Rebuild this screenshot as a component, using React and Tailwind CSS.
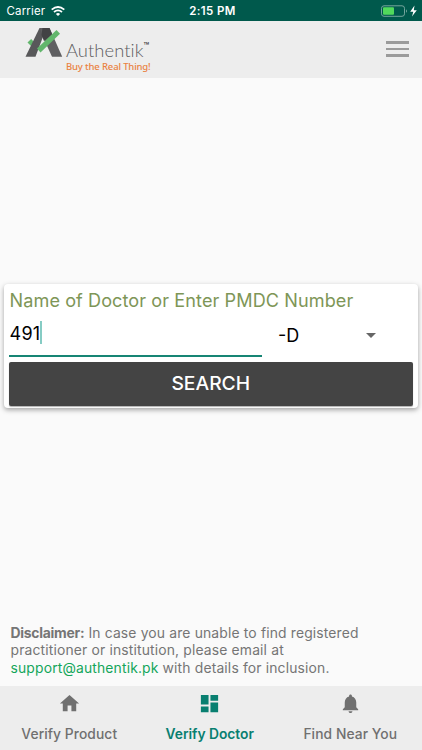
import React from "react";

function Logo() {
  return (
    <div className="flex pl-[25px]">
      <svg className="mt-[7px] h-[30px] w-[38px] shrink-0" viewBox="0 0 38 30">
        <path d="M2.5 14.5L6.2 11L9 14L6.5 18.5Z" fill="#62b66c" />
        <path d="M14.5 0H21L17.5 10L10.5 28.8H0.5Z" fill="#58585a" />
        <path d="M15 0H24.5L37.2 28.8H27L17.5 8Z" fill="#5f5f61" />
        <path d="M17.5 0H24.5L27.2 6.2L19 13L16.5 7Z" fill="#424244" />
        <path d="M31.5 2L35 5.8L15.5 24.5L12 20.5Z" fill="#62b66c" />
      </svg>
      <div className="flex flex-col pl-[3px] pt-[20px]">
        <div className="flex h-[19px] items-start whitespace-nowrap text-[#5c5c60]">
          <span className="font-[Lato] text-[18.4px] font-light leading-[19px] tracking-[0.05px]">Authentik</span>
          <span className="text-[9px] font-semibold leading-[9px] tracking-[-0.5px] text-[#444]">™</span>
        </div>
        <span className="mt-px whitespace-nowrap font-['Noto_Sans'] text-[9.5px] font-medium leading-[11px] tracking-[-0.15px] text-[#ea8242]">Buy the Real Thing!</span>
      </div>
    </div>
  );
}

function StatusBar() {
  return (
    <div className="grid h-[21px] grid-cols-3 items-center bg-[#00594c] text-[11.5px] text-white">
      <div className="flex items-center gap-[6px] pl-[6.5px] pt-[2px]">
        <span className="tracking-[0.15px]">Carrier</span>
        <svg className="mb-[2px] h-[10px] w-[14px]" viewBox="0 0 14 10" fill="none" stroke="white" strokeWidth="1.8">
          <path d="M0.7 3.6Q7 -1.7 13.3 3.6" />
          <path d="M3 6Q7 2.7 11 6" />
          <path d="M4.9 7.9Q7 6.2 9.1 7.9L7 10Z" fill="white" stroke="none" />
        </svg>
      </div>
      <span className="pl-[3px] pt-[2px] text-center font-semibold tracking-[0.4px]">2:15 PM</span>
      <div className="flex items-center justify-end pr-[4px]">
        <svg className="h-[12px] w-[37px]" viewBox="0 0 37 12">
          <rect x="0.5" y="0.8" width="23" height="10.5" rx="2.5" fill="none" stroke="#75a59d" />
          <rect x="2" y="2.3" width="11" height="7.5" rx="1" fill="#51d95c" />
          <path d="M25 4.2Q27 6 25 7.8Z" fill="#75a59d" />
          <path d="M33.5 0.5L29.2 6.7H32.3L31 11.5L35.8 5.2H32.8Z" fill="white" />
        </svg>
      </div>
    </div>
  );
}

function Tab({ label, path, active }) {
  return (
    <div className={`flex w-[140.5px] flex-col items-center ${active ? "text-[#087f70]" : "text-[#707070]"}`}>
      <svg className="mt-[6px] h-[23px] w-[23px] fill-current" viewBox="0 0 24 24"><path d={path} /></svg>
      <span className={`mt-[10px] whitespace-nowrap text-[13.8px] leading-[18px] ${active ? "font-semibold tracking-[-0.02px]" : "font-medium tracking-[0.08px]"}`}>{label}</span>
    </div>
  );
}

export default function App() {
  return (
    <div className="flex h-[750px] w-[422px] flex-col overflow-hidden bg-[#fafafa] font-[Inter,sans-serif]">
      <StatusBar />
      <header className="flex h-[57px] justify-between bg-[#ededed]">
        <Logo />
        <div className="mr-[13px] flex flex-col gap-[4px] pt-[20px]">
          <i className="h-[2.5px] w-[23px] bg-[#9b9b9b]" />
          <i className="h-[2.5px] w-[23px] bg-[#9b9b9b]" />
          <i className="h-[2.5px] w-[23px] bg-[#9b9b9b]" />
        </div>
      </header>
      <main className="flex flex-1 flex-col pt-[206px]">
        <section className="ml-[4px] h-[124px] w-[414px] rounded-[4px] bg-white px-[5px] shadow-[0_2px_5px_rgba(0,0,0,0.35)]">
          <h1 className="h-[33px] whitespace-nowrap pl-[0.5px] pt-[4px] text-[18.1px] leading-[24px] tracking-[0.08px] text-[#7e9657]">Name of Doctor or Enter PMDC Number</h1>
          <div className="flex h-[40px]">
            <div className="flex h-[40px] w-[253px] items-start border-b-2 border-[#168574] pt-[4px] text-[18px] leading-[25px] text-black">
              <span className="pl-[0.5px] tracking-[0.25px]">491</span>
              <i className="h-[23px] w-[1.5px] bg-[#86ccc4]" />
            </div>
            <div className="flex h-[37px] flex-1 items-center pl-[16px] text-[18px] text-black">
              <span className="w-[88px]">-D</span>
              <svg className="h-[5px] w-[10px]" viewBox="0 0 10 5"><path d="M0 0H10L5 5Z" fill="#666" /></svg>
            </div>
          </div>
          <button className="mt-[5px] block h-[44px] w-[403.5px] rounded-[2px] bg-[#444] pb-px text-[19.3px] font-medium text-white shadow-[0_1px_1px_rgba(0,0,0,0.3)]">SEARCH</button>
        </section>
        <p className="mt-auto whitespace-nowrap pb-[9px] pl-[10.5px] text-[13.9px] leading-[17.4px] tracking-[0.15px] text-[#757575]">
          <b className="tracking-[-0.25px]">Disclaimer:</b> In case you are unable to find registered<br />
          practitioner or institution, please email at<br />
          <span className="text-[#14a65a]">support@authentik.pk</span> with details for inclusion.
        </p>
      </main>
      <nav className="flex h-[64px] bg-[#ededed]">
        <div className="-ml-px flex">
          <Tab label="Verify Product" path="M10 20v-6h4v6h5v-8h3L12 3 2 12h3v8z" />
          <Tab active label="Verify Doctor" path="M3 13h8V3H3v10zm0 8h8v-6H3v6zm10 0h8V11h-8v10zm0-18v6h8V3h-8z" />
          <Tab label="Find Near You" path="M12 22c1.1 0 2-.9 2-2h-4c0 1.1.89 2 2 2zm6-6v-5c0-3.07-1.64-5.64-4.5-6.32V4c0-.83-.67-1.5-1.5-1.5s-1.5.67-1.5 1.5v.68C7.63 5.36 6 7.92 6 11v5l-2 2v1h16v-1l-2-2z" />
        </div>
      </nav>
    </div>
  );
}
